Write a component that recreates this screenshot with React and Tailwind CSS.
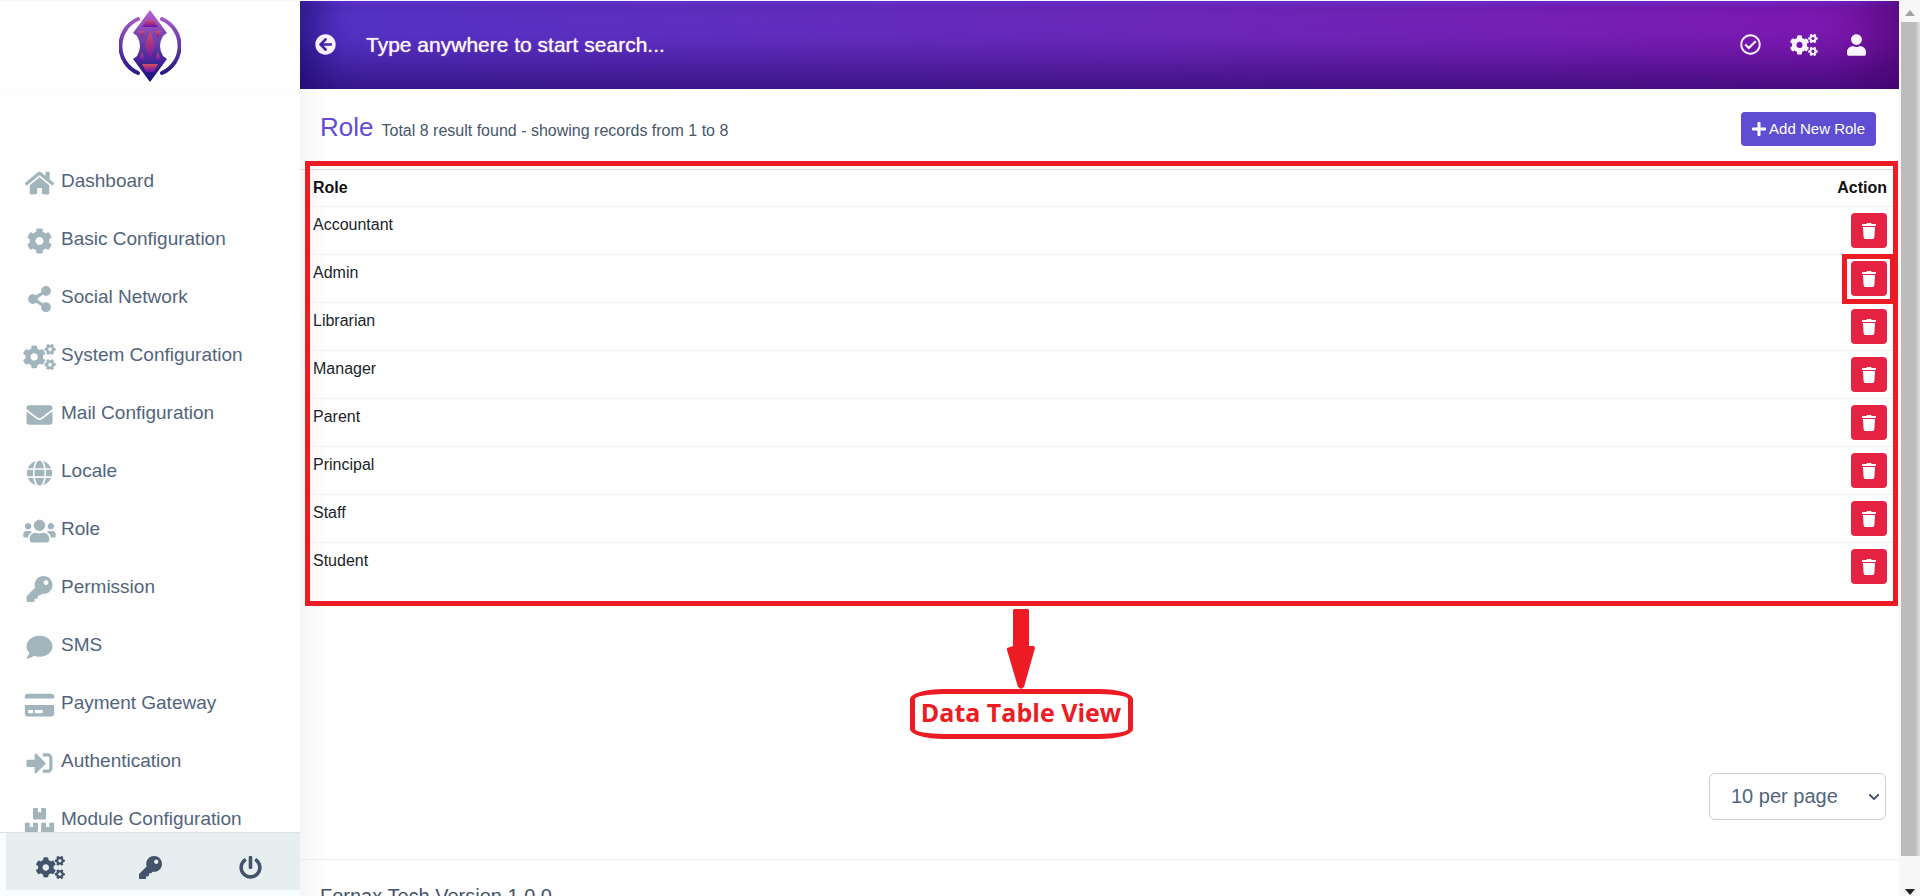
import React, { useState } from 'react'
import {
  FaHome, FaCog, FaShareAlt, FaCogs, FaEnvelope, FaGlobe, FaUsers, FaKey, FaComment,
  FaCreditCard, FaSignInAlt, FaBoxes, FaPowerOff, FaArrowCircleLeft, FaRegCheckCircle,
  FaUser, FaPlus, FaTrash, FaChevronDown
} from 'react-icons/fa'

const menu = [
  { label: 'Dashboard', icon: FaHome },
  { label: 'Basic Configuration', icon: FaCog },
  { label: 'Social Network', icon: FaShareAlt },
  { label: 'System Configuration', icon: FaCogs },
  { label: 'Mail Configuration', icon: FaEnvelope },
  { label: 'Locale', icon: FaGlobe },
  { label: 'Role', icon: FaUsers },
  { label: 'Permission', icon: FaKey },
  { label: 'SMS', icon: FaComment },
  { label: 'Payment Gateway', icon: FaCreditCard },
  { label: 'Authentication', icon: FaSignInAlt },
  { label: 'Module Configuration', icon: FaBoxes }
]

const roles = ['Accountant', 'Admin', 'Librarian', 'Manager', 'Parent', 'Principal', 'Staff', 'Student']

function Logo() {
  return (
    <svg viewBox="0 0 62 72" className="w-[62px] h-[72px]" role="img" aria-label="Logo">
      <defs>
        <linearGradient id="body" gradientUnits="userSpaceOnUse" x1="0" y1="0" x2="0" y2="72">
          <stop offset="0" stopColor="#b863cf" />
          <stop offset="0.5" stopColor="#6038a6" />
          <stop offset="1" stopColor="#150f7c" />
        </linearGradient>
        <linearGradient id="gem" x1="0" y1="0" x2="0" y2="1">
          <stop offset="0" stopColor="#d8505c" />
          <stop offset="1" stopColor="#6a12b4" />
        </linearGradient>
      </defs>
      <g fill="none" stroke="url(#body)" strokeWidth="4" strokeLinecap="round">
        <path d="M19 9 A29.5 29.5 0 0 0 19 63" />
        <path d="M43 9 A29.5 29.5 0 0 1 43 63" />
      </g>
      <path d="M31 0 L48 23 L44 26 Q38 36 44 46 L48 49 L31 72 L14 49 L18 46 Q24 36 18 26 L14 23 Z" fill="url(#body)" />
      <g fill="url(#gem)">
        <path d="M28 10 H34 L39 17 H23 Z" />
        <path d="M31 20 L36 36 L31 51 L26 36 Z" />
        <path d="M20 21 H26 L23 28 Z" />
        <path d="M36 21 H42 L39 28 Z" />
        <path d="M23 42 L26 50 H20 Z" />
        <path d="M39 42 L42 50 H36 Z" />
        <path d="M23 54 H39 L35 62 H27 Z" />
      </g>
    </svg>
  )
}

function Sidebar() {
  return (
    <aside className="flex flex-col w-[300px] shrink-0 bg-[#fefefe]">
      <div className="flex justify-center items-start h-[88px] pt-[9px] shrink-0 shadow-[8px_3px_6px_rgba(0,0,0,0.02)]">
        <Logo />
      </div>
      <nav className="flex-1 min-h-0 overflow-hidden pt-[63px]">
        <ul>
          {menu.map(({ label, icon: Icon }) => (
            <li key={label}>
              <a href="#" className="flex items-center gap-[5px] h-[58px] pl-[23px] text-[19px] text-[#52647c]">
                <span className="pt-[3px] text-[#a2b4bc]"><Icon className="w-[33px] h-[26px]" /></span>
                {label}
              </a>
            </li>
          ))}
        </ul>
      </nav>
      <div className="bg-[#f6fefe] pb-[6px] shrink-0">
        <div className="grid grid-cols-3 justify-items-center items-center h-[58px] pt-3 bg-linear-to-r from-[#f6fefe] from-[6px] to-[#e7eef0] to-[6px] border-t border-[#dbe3e5] text-[#43536a]">
          <button aria-label="Configuration"><FaCogs className="w-[29px] h-[23px]" /></button>
          <button aria-label="Permission"><FaKey className="w-[29px] h-[23px]" /></button>
          <button aria-label="Logout"><FaPowerOff className="w-[29px] h-[23px]" /></button>
        </div>
      </div>
    </aside>
  )
}

function Header() {
  return (
    <header className="flex items-center h-[88px] shrink-0 pl-[15px] pr-[33px] pb-[1px] text-[#fbf3ff] bg-linear-to-r from-[#5736cc] to-[#8418b6] shadow-[inset_36px_0_36px_-16px_rgba(10,0,90,0.5),inset_-60px_0_60px_-30px_rgba(60,0,90,0.5),inset_0_-50px_44px_-20px_rgba(30,0,90,0.5),inset_0_5px_5px_-2px_rgba(130,70,255,0.5)]">
      <button aria-label="Back"><FaArrowCircleLeft className="w-[21px] h-[21px]" /></button>
      <input
        aria-label="Search"
        placeholder="Type anywhere to start search..."
        className="flex-1 ml-[30px] bg-transparent outline-none text-[21px] placeholder:text-[#fbf3ff] placeholder:opacity-100 [text-shadow:0_0_1px_#fbf3ff]"
      />
      <div className="flex items-center gap-[29px]">
        <button aria-label="Tasks"><FaRegCheckCircle className="w-[21px] h-[21px]" /></button>
        <button aria-label="Settings"><FaCogs className="w-[28px] h-[22px]" /></button>
        <button aria-label="Account"><FaUser className="w-[19px] h-[22px]" /></button>
      </div>
    </header>
  )
}

function RoleTable() {
  return (
    <div className="relative">
      <table className="w-full border-t border-[#d9dbe6] text-base leading-6 text-[#212529]">
        <thead>
          <tr className="h-[37px] text-[#111111]">
            <th className="pl-[13px] text-left font-bold">Role</th>
            <th className="pr-3 text-right font-bold">Action</th>
          </tr>
        </thead>
        <tbody>
          {roles.map(role => (
            <tr key={role} className="h-12 border-t border-[#f0f0f0]">
              <td className="pl-[13px] pt-[6px] align-top">{role}</td>
              <td className="pr-3 pt-[6px] align-top">
                <div className="relative w-9 ml-auto">
                  <button aria-label={`Delete ${role}`} className="flex items-center justify-center w-9 h-[35px] rounded-sm bg-[#e62343] text-white"><FaTrash className="w-[14px] h-4" /></button>
                  {role === 'Admin' && <span className="absolute -top-[7px] -left-[9px] w-[53px] h-[50px] border-5 border-[#ed1c24]" />}
                </div>
              </td>
            </tr>
          ))}
        </tbody>
      </table>
      <div className="absolute -top-2 left-[5px] right-[1px] -bottom-[15px] border-5 border-[#ed1c24] pointer-events-none" />
    </div>
  )
}

function Callout() {
  return (
    <div className="flex flex-col items-center mt-[18px] pr-[157px]">
      <svg viewBox="0 0 28 80" className="w-7 h-20" fill="#ed1c24">
        <path d="M7 0 H21 L22 1 V37 H27 L28 39 L17 78 L14 80 L11 78 L0 41 V39 L6 37 V1 Z" />
      </svg>
      <div className="flex items-center justify-center w-[223px] h-[50px] pb-[2px] border-5 border-[#ed1c24] rounded-[34px/10px] font-['Open_Sans',sans-serif] font-bold text-[25px] text-[#ed1c24]">
        Data Table View
      </div>
    </div>
  )
}

function Scrollbar() {
  return (
    <div className="flex flex-col items-center w-[21px] shrink-0 bg-[#f7f7f7]" aria-hidden="true">
      <svg viewBox="0 0 10 6" className="w-[10px] h-[6px] mt-[9px] mb-[6px]" fill="#a3a3a3"><path d="M5 0 L10 6 H0 Z" /></svg>
      <div className="flex-1 self-stretch ml-[2px] bg-linear-to-r from-[#bcbcbc] from-75% to-[#e2e2e2]" />
      <svg viewBox="0 0 10 6" className="w-[10px] h-[6px] mt-[33px] mb-[1px]" fill="#222222"><path d="M0 0 H10 L5 6 Z" /></svg>
    </div>
  )
}

export default function App() {
  const [perPage, setPerPage] = useState('10')

  return (
    <div className="flex h-screen overflow-hidden bg-white border-t border-[#f6f6ff] font-['Liberation_Sans',Arial,sans-serif]">
      <Sidebar />
      <div className="flex flex-col flex-1 min-w-0">
        <Header />
        <main className="bg-linear-to-r from-[#f6f6f6] to-white to-[28px]">
          <div className="flex items-center justify-between h-20 pl-5 pr-[23px]">
            <div className="flex items-baseline gap-2 pb-1">
              <h1 className="text-[26px] text-[#624bd8]">Role</h1>
              <p className="text-base text-[#48566a]">Total 8 result found - showing records from 1 to 8</p>
            </div>
            <button className="flex items-center gap-[3px] h-[34px] px-[11px] rounded-sm bg-[#5f4dd2] text-white text-[15px]">
              <FaPlus className="w-[14px] h-4" />Add New Role
            </button>
          </div>
          <RoleTable />
          <Callout />
          <div className="flex justify-end mt-[34px] pr-[13px]">
            <div className="relative">
              <select
                aria-label="Records per page"
                value={perPage}
                onChange={e => setPerPage(e.target.value)}
                className="appearance-none w-[177px] h-[47px] pl-[21px] border border-[#c9ced8] rounded-md bg-white text-xl text-[#52647c]"
              >
                <option value="10">10 per page</option>
                <option value="25">25 per page</option>
                <option value="50">50 per page</option>
                <option value="100">100 per page</option>
              </select>
              <FaChevronDown className="absolute right-[6px] top-[18px] text-xs text-[#43536a] pointer-events-none" />
            </div>
          </div>
          <footer className="mt-[39px] pt-[22px] pl-5 border-t border-[#ececec] text-xl text-[#43536a]">Fornax Tech Version 1.0.0</footer>
        </main>
      </div>
      <Scrollbar />
    </div>
  )
}
